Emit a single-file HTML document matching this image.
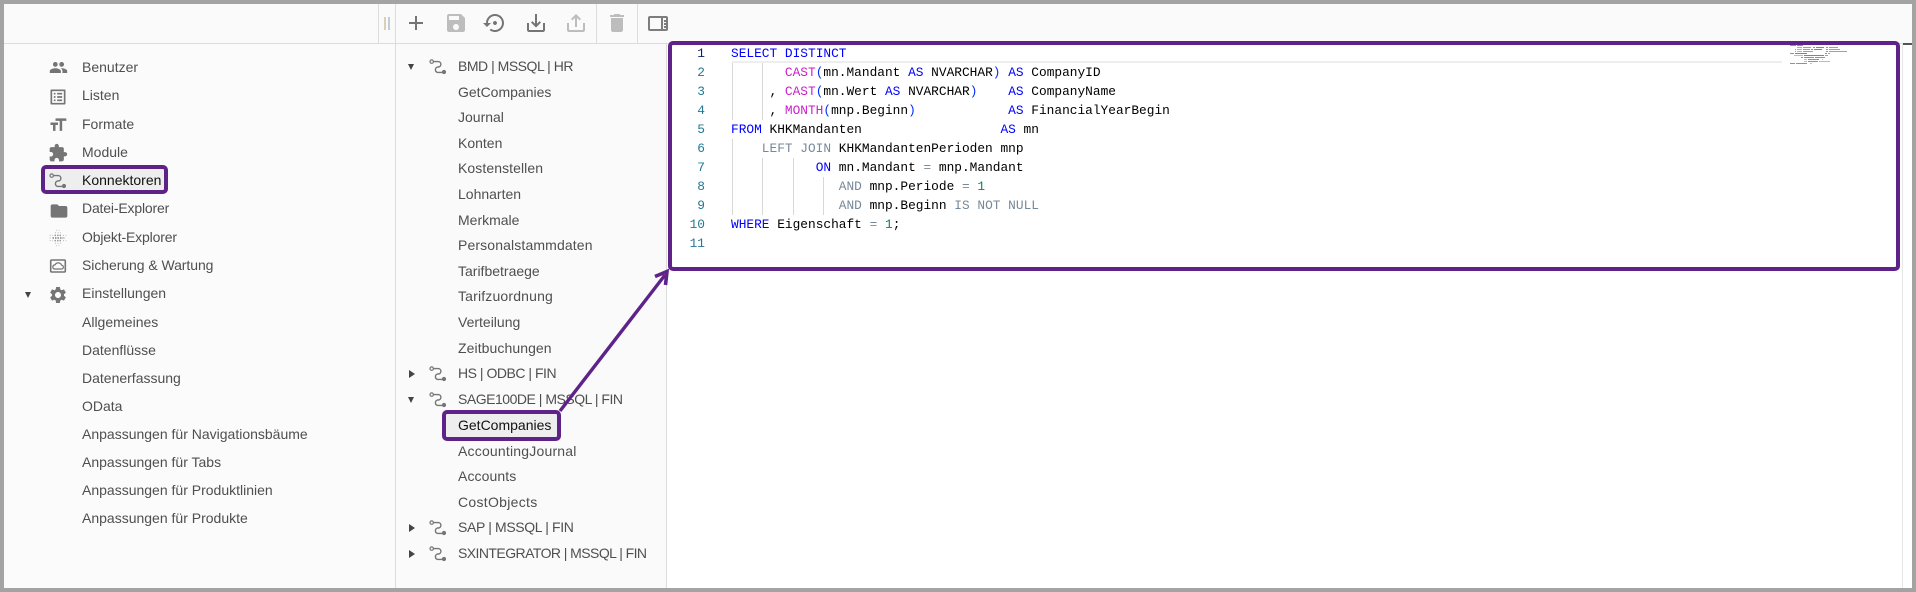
<!DOCTYPE html>
<html><head><meta charset="utf-8">
<style>
html,body{margin:0;padding:0;background:#fff}
#p{position:relative;width:1916px;height:592px;overflow:hidden;background:#fff;font-family:"Liberation Sans",sans-serif;font-size:14px;color:#4f4f4f}
.a{position:absolute}
.t{position:absolute;white-space:pre;line-height:20px;height:20px}
.t.s{color:#111}
.cp{letter-spacing:-.48px}
svg{position:absolute;overflow:visible}
.i{fill:#757575}
.d{fill:#bdbdbd}
.c{position:absolute;left:731px;white-space:pre;font-family:"Liberation Mono",monospace;font-size:12.83px;line-height:19px;height:19px;color:#000}
.n{position:absolute;width:50px;left:655px;text-align:right;font-family:"Liberation Mono",monospace;font-size:12.83px;line-height:19px;height:19px;color:#237893}
.k{color:#00f}.f{color:#c81fc8}.b{color:#0431fa}.g{color:#778899}.u{color:#098658}
.ig{position:absolute;width:1px;background:#d8d8d8}
.v{position:absolute;width:1px;background:#dcdcdc}
.tr{position:absolute;width:0;height:0}
.dn{border-left:3.8px solid transparent;border-right:3.8px solid transparent;border-top:6px solid #444}
.rt{border-top:4px solid transparent;border-bottom:4px solid transparent;border-left:6px solid #444}
</style></head><body>
<div id="p">
<!-- panels -->
<div class="a" style="left:4px;top:4px;width:1908px;height:39px;background:#fafafa"></div>
<div class="a" style="left:4px;top:44px;width:391px;height:544px;background:#fbfbfb"></div>
<div class="a" style="left:396px;top:44px;width:270px;height:544px;background:#fafafb"></div>
<div class="a" style="left:4px;top:43px;width:1908px;height:1px;background:#dcdcdc"></div>
<div class="v" style="left:378px;top:4px;height:39px"></div>
<div class="v" style="left:395px;top:4px;height:584px"></div>
<div class="v" style="left:596px;top:4px;height:39px"></div>
<div class="v" style="left:637px;top:4px;height:39px"></div>
<div class="v" style="left:666px;top:44px;height:544px"></div>
<div class="v" style="left:1902px;top:44px;height:544px;background:#e6e6e6"></div>
<div class="a" style="left:1903px;top:43px;width:9px;height:2px;background:#555"></div>
<!-- handle -->
<div class="a" style="left:384px;top:17px;width:2px;height:13px;background:#e0cdb8"></div>
<div class="a" style="left:387.5px;top:17px;width:2px;height:13px;background:#c0cddb"></div>

<!-- toolbar icons -->
<svg style="left:404px;top:11px" width="24" height="24" viewBox="0 0 24 24"><path class="i" d="M19 13h-6v6h-2v-6H5v-2h6V5h2v6h6v2z"/></svg>
<svg style="left:444px;top:11px" width="24" height="24" viewBox="0 0 24 24"><path class="d" d="M17 3H5c-1.11 0-2 .9-2 2v14c0 1.1.89 2 2 2h14c1.1 0 2-.9 2-2V7l-4-4zm-5 16c-1.66 0-3-1.34-3-3s1.34-3 3-3 3 1.34 3 3-1.34 3-3 3zm3-10H5V5h10v4z"/></svg>
<svg style="left:483px;top:11px" width="24" height="24" viewBox="0 0 24 24"><path class="i" d="M14 12c0-1.1-.9-2-2-2s-2 .9-2 2 .9 2 2 2 2-.9 2-2zm-2-9c-4.97 0-9 4.03-9 9H0l4 4 4-4H5c0-3.87 3.13-7 7-7s7 3.13 7 7-3.13 7-7 7c-1.51 0-2.91-.49-4.06-1.3l-1.42 1.44C8.04 20.3 9.94 21 12 21c4.97 0 9-4.03 9-9s-4.03-9-9-9z"/></svg>
<svg style="left:524px;top:11px" width="24" height="24" viewBox="0 0 24 24"><path class="i" d="M19 12v7H5v-7H3v7c0 1.1.9 2 2 2h14c1.1 0 2-.9 2-2v-7h-2zm-6 .67l2.59-2.58L17 11.5l-5 5-5-5 1.41-1.41L11 12.67V3h2z"/></svg>
<svg style="left:564px;top:11px" width="24" height="24" viewBox="0 0 24 24"><path class="d" d="M19 12v7H5v-7H3v7c0 1.1.9 2 2 2h14c1.1 0 2-.9 2-2v-7h-2zM11 6.83 8.41 9.41 7 8l5-5 5 5-1.41 1.41L13 6.83V16h-2z"/></svg>
<svg style="left:605px;top:11px" width="24" height="24" viewBox="0 0 24 24"><path class="d" d="M6 19c0 1.1.9 2 2 2h8c1.1 0 2-.9 2-2V7H6v12zM19 4h-3.5l-1-1h-5l-1 1H5v2h14V4z"/></svg>
<svg style="left:648px;top:15px" width="20" height="17" viewBox="0 0 20 17"><rect x="1" y="2" width="18" height="13" rx="1" fill="none" stroke="#7d7d7d" stroke-width="2"/><rect x="13" y="2" width="2" height="13" fill="#7d7d7d"/><rect x="16" y="5" width="2.5" height="2" fill="#7d7d7d"/><rect x="16" y="8" width="2.5" height="2" fill="#7d7d7d"/><rect x="16" y="11" width="2.5" height="2" fill="#7d7d7d"/></svg>

<!-- sidebar highlight -->
<div class="a" style="left:41px;top:165px;width:119px;height:21px;border:4px solid #5f2289;border-radius:5px;background:#eee"></div>

<!-- left icons -->
<svg style="left:49px;top:58px" width="19" height="19" viewBox="0 0 24 24"><path class="i" d="M16 11c1.66 0 2.99-1.34 2.99-3S17.66 5 16 5c-1.66 0-3 1.34-3 3s1.34 3 3 3zm-8 0c1.66 0 2.99-1.34 2.99-3S9.66 5 8 5C6.34 5 5 6.34 5 8s1.34 3 3 3zm0 2c-2.33 0-7 1.17-7 3.5V19h14v-2.5c0-2.33-4.67-3.5-7-3.5zm8 0c-.29 0-.62.02-.97.05 1.16.84 1.97 1.97 1.97 3.45V19h6v-2.5c0-2.33-4.67-3.5-7-3.5z"/></svg>
<svg style="left:48px;top:87px" width="20" height="20" viewBox="0 0 24 24"><path class="i" d="M19 5v14H5V5h14m1.1-2H3.9c-.5 0-.9.4-.9.9v16.2c0 .4.4.9.9.9h16.2c.4 0 .9-.5.9-.9V3.9c0-.5-.5-.9-.9-.9zM11 7h6v2h-6V7zm0 4h6v2h-6v-2zm0 4h6v2h-6zM7 7h2v2H7zm0 4h2v2H7zm0 4h2v2H7z"/></svg>
<svg style="left:48px;top:115px" width="20" height="20" viewBox="0 0 24 24"><path class="i" d="M9 4v3h5v12h3V7h5V4H9zm-6 8h3v7h3v-7h3V9H3v3z"/></svg>
<svg style="left:48px;top:143px" width="20" height="20" viewBox="0 0 24 24"><path class="i" d="M20.5 11H19V7c0-1.1-.9-2-2-2h-4V3.5C13 2.12 11.88 1 10.5 1S8 2.12 8 3.5V5H4c-1.1 0-1.99.9-1.99 2v3.8H3.5c1.49 0 2.7 1.21 2.7 2.7s-1.21 2.7-2.7 2.7H2V20c0 1.1.9 2 2 2h3.8v-1.5c0-1.49 1.21-2.7 2.7-2.7 1.49 0 2.7 1.21 2.7 2.7V22H17c1.1 0 2-.9 2-2v-4h1.5c1.38 0 2.5-1.12 2.5-2.5S21.88 11 20.5 11z"/></svg>
<svg style="left:48px;top:171px" width="20" height="20" viewBox="0 0 20 20"><circle cx="3.7" cy="4.6" r="1.7" fill="none" stroke="#757575" stroke-width="1.2"/><path d="M5.5 4.6H10.2a2.7 2.7 0 0 1 0 5.4H9.5a2.8 2.8 0 0 0 0 5.4H15" fill="none" stroke="#757575" stroke-width="1.4"/><circle cx="16" cy="15" r="2.1" fill="#757575"/></svg>
<svg style="left:48.5px;top:200.7px" width="20" height="20" viewBox="0 0 24 24"><path class="i" d="M10 4H4c-1.1 0-1.99.9-1.99 2L2 18c0 1.1.9 2 2 2h16c1.1 0 2-.9 2-2V8c0-1.1-.9-2-2-2h-8l-2-2z"/></svg>
<svg style="left:48px;top:228px" width="20" height="20" viewBox="0 0 20 20">
<g stroke="#8a8a8a" fill="none"><path d="M4.5 10H15.5" stroke-width="1.6" stroke-dasharray="1.5 1" stroke="#777" opacity=".9"/><path d="M6.5 7.4H13.5M6.5 12.6H13.5" stroke-width="1.5" stroke-dasharray="1.5 1" opacity=".85"/><path d="M1.7 10H4M16 10H18.3M1.7 7.4H5M15 7.4H18.3M1.7 12.6H5M15 12.6H18.3M7 4.8H13M7 15.2H13" stroke-width="1" stroke-dasharray="1 1.6" opacity=".6"/><path d="M8 2.2H12M8 17.8H12" stroke-width="1" stroke-dasharray="1 1.6" opacity=".45"/></g></svg>
<svg style="left:48px;top:256px" width="20" height="20" viewBox="0 0 20 20"><rect x="2.7" y="4" width="14.6" height="12" rx="1" fill="none" stroke="#757575" stroke-width="1.6"/><path d="M6.3 13H13.4a1.9 1.9 0 0 0 .2-3.8A3.6 3.6 0 0 0 7 8.9 2.1 2.1 0 0 0 6.3 13z" fill="none" stroke="#757575" stroke-width="1.2"/></svg>
<svg style="left:48px;top:285px" width="20" height="20" viewBox="0 0 24 24"><path class="i" d="M19.14 12.94c.04-.3.06-.61.06-.94 0-.32-.02-.64-.07-.94l2.03-1.58c.18-.14.23-.41.12-.61l-1.92-3.32c-.12-.22-.37-.29-.59-.22l-2.39.96c-.5-.38-1.03-.7-1.62-.94l-.36-2.54c-.04-.24-.24-.41-.48-.41h-3.84c-.24 0-.43.17-.47.41l-.36 2.54c-.59.24-1.13.57-1.62.94l-2.39-.96c-.22-.08-.47 0-.59.22L2.74 8.87c-.12.21-.08.47.12.61l2.03 1.58c-.05.3-.09.63-.09.94s.02.64.07.94l-2.03 1.58c-.18.14-.23.41-.12.61l1.92 3.32c.12.22.37.29.59.22l2.39-.96c.5.38 1.03.7 1.62.94l.36 2.54c.05.24.24.41.48.41h3.84c.24 0 .44-.17.47-.41l.36-2.54c.59-.24 1.13-.56 1.62-.94l2.39.96c.22.08.47 0 .59-.22l1.92-3.32c.12-.22.07-.47-.12-.61l-2.01-1.58zM12 15.6c-1.98 0-3.6-1.62-3.6-3.6s1.62-3.6 3.6-3.6 3.6 1.62 3.6 3.6-1.62 3.6-3.6 3.6z"/></svg>
<div class="tr dn" style="left:25px;top:292px"></div>

<!-- left text -->
<span class="t" style="left:82px;top:57px">Benutzer</span>
<span class="t" style="left:82px;top:85px">Listen</span>
<span class="t" style="left:82px;top:114px">Formate</span>
<span class="t" style="left:82px;top:142px">Module</span>
<span class="t s" style="left:82px;top:170px">Konnektoren</span>
<span class="t" style="left:82px;top:198px;letter-spacing:-.17px">Datei-Explorer</span>
<span class="t" style="left:82px;top:227px;letter-spacing:-.16px">Objekt-Explorer</span>
<span class="t" style="left:82px;top:255px;letter-spacing:-.06px">Sicherung &amp; Wartung</span>
<span class="t" style="left:82px;top:283px">Einstellungen</span>
<span class="t" style="left:82px;top:312px">Allgemeines</span>
<span class="t" style="left:82px;top:340px">Datenflüsse</span>
<span class="t" style="left:82px;top:368px">Datenerfassung</span>
<span class="t" style="left:82px;top:396px">OData</span>
<span class="t" style="left:82px;top:424px">Anpassungen für Navigationsbäume</span>
<span class="t" style="left:82px;top:452px">Anpassungen für Tabs</span>
<span class="t" style="left:82px;top:480px">Anpassungen für Produktlinien</span>
<span class="t" style="left:82px;top:508px">Anpassungen für Produkte</span>

<!-- middle highlight -->
<div class="a" style="left:442px;top:410px;width:111px;height:23px;border:4px solid #5f2289;border-radius:5px;background:#eee"></div>

<!-- middle tree icons -->
<svg style="left:428px;top:57px" width="20" height="20" viewBox="0 0 20 20"><circle cx="3.7" cy="4.6" r="1.7" fill="none" stroke="#757575" stroke-width="1.2"/><path d="M5.5 4.6H10.2a2.7 2.7 0 0 1 0 5.4H9.5a2.8 2.8 0 0 0 0 5.4H15" fill="none" stroke="#757575" stroke-width="1.4"/><circle cx="16" cy="15" r="2.1" fill="#757575"/></svg>
<svg style="left:428px;top:364px" width="20" height="20" viewBox="0 0 20 20"><circle cx="3.7" cy="4.6" r="1.7" fill="none" stroke="#757575" stroke-width="1.2"/><path d="M5.5 4.6H10.2a2.7 2.7 0 0 1 0 5.4H9.5a2.8 2.8 0 0 0 0 5.4H15" fill="none" stroke="#757575" stroke-width="1.4"/><circle cx="16" cy="15" r="2.1" fill="#757575"/></svg>
<svg style="left:428px;top:390px" width="20" height="20" viewBox="0 0 20 20"><circle cx="3.7" cy="4.6" r="1.7" fill="none" stroke="#757575" stroke-width="1.2"/><path d="M5.5 4.6H10.2a2.7 2.7 0 0 1 0 5.4H9.5a2.8 2.8 0 0 0 0 5.4H15" fill="none" stroke="#757575" stroke-width="1.4"/><circle cx="16" cy="15" r="2.1" fill="#757575"/></svg>
<svg style="left:428px;top:518px" width="20" height="20" viewBox="0 0 20 20"><circle cx="3.7" cy="4.6" r="1.7" fill="none" stroke="#757575" stroke-width="1.2"/><path d="M5.5 4.6H10.2a2.7 2.7 0 0 1 0 5.4H9.5a2.8 2.8 0 0 0 0 5.4H15" fill="none" stroke="#757575" stroke-width="1.4"/><circle cx="16" cy="15" r="2.1" fill="#757575"/></svg>
<svg style="left:428px;top:544px" width="20" height="20" viewBox="0 0 20 20"><circle cx="3.7" cy="4.6" r="1.7" fill="none" stroke="#757575" stroke-width="1.2"/><path d="M5.5 4.6H10.2a2.7 2.7 0 0 1 0 5.4H9.5a2.8 2.8 0 0 0 0 5.4H15" fill="none" stroke="#757575" stroke-width="1.4"/><circle cx="16" cy="15" r="2.1" fill="#757575"/></svg>
<div class="tr dn" style="left:408px;top:64px"></div>
<div class="tr rt" style="left:409px;top:370px"></div>
<div class="tr dn" style="left:408px;top:397px"></div>
<div class="tr rt" style="left:409px;top:524px"></div>
<div class="tr rt" style="left:409px;top:550px"></div>

<!-- middle text -->
<span class="t cp" style="left:458px;top:56px">BMD | MSSQL | HR</span>
<span class="t" style="left:458px;top:82px">GetCompanies</span>
<span class="t" style="left:458px;top:107px">Journal</span>
<span class="t" style="left:458px;top:133px">Konten</span>
<span class="t" style="left:458px;top:158px;letter-spacing:.08px">Kostenstellen</span>
<span class="t" style="left:458px;top:184px">Lohnarten</span>
<span class="t" style="left:458px;top:210px">Merkmale</span>
<span class="t" style="left:458px;top:235px;letter-spacing:.13px">Personalstammdaten</span>
<span class="t" style="left:458px;top:261px">Tarifbetraege</span>
<span class="t" style="left:458px;top:286px;letter-spacing:.17px">Tarifzuordnung</span>
<span class="t" style="left:458px;top:312px">Verteilung</span>
<span class="t" style="left:458px;top:338px;letter-spacing:.08px">Zeitbuchungen</span>
<span class="t cp" style="left:458px;top:363px">HS | ODBC | FIN</span>
<span class="t cp" style="left:458px;top:389px">SAGE100DE | MSSQL | FIN</span>
<span class="t s" style="left:458px;top:415px">GetCompanies</span>
<span class="t" style="left:458px;top:441px;letter-spacing:.2px">AccountingJournal</span>
<span class="t" style="left:458px;top:466px;letter-spacing:.1px">Accounts</span>
<span class="t" style="left:458px;top:492px;letter-spacing:.3px">CostObjects</span>
<span class="t" style="left:458px;top:517px;letter-spacing:-.36px">SAP | MSSQL | FIN</span>
<span class="t" style="left:458px;top:543px;letter-spacing:-.56px">SXINTEGRATOR | MSSQL | FIN</span>

<!-- editor -->
<div class="a" style="left:732px;top:61px;width:1050px;height:2px;background:#eee"></div>
<div class="ig" style="left:732px;top:63px;height:57px"></div>
<div class="ig" style="left:762px;top:63px;height:57px"></div>
<div class="ig" style="left:732px;top:139px;height:76px"></div>
<div class="ig" style="left:762px;top:158px;height:57px"></div>
<div class="ig" style="left:793px;top:158px;height:57px"></div>
<div class="ig" style="left:823px;top:177px;height:38px"></div>

<span class="n" style="top:44px;color:#0b216f">1</span>
<span class="n" style="top:63px">2</span>
<span class="n" style="top:82px">3</span>
<span class="n" style="top:101px">4</span>
<span class="n" style="top:120px">5</span>
<span class="n" style="top:139px">6</span>
<span class="n" style="top:158px">7</span>
<span class="n" style="top:177px">8</span>
<span class="n" style="top:196px">9</span>
<span class="n" style="top:215px">10</span>
<span class="n" style="top:234px">11</span>

<div class="c" style="top:44px"><span class="k">SELECT</span> <span class="k">DISTINCT</span></div>
<div class="c" style="top:63px">       <span class="f">CAST</span><span class="b">(</span>mn.Mandant <span class="k">AS</span> NVARCHAR<span class="b">)</span> <span class="k">AS</span> CompanyID</div>
<div class="c" style="top:82px">     , <span class="f">CAST</span><span class="b">(</span>mn.Wert <span class="k">AS</span> NVARCHAR<span class="b">)</span>    <span class="k">AS</span> CompanyName</div>
<div class="c" style="top:101px">     , <span class="f">MONTH</span><span class="b">(</span>mnp.Beginn<span class="b">)</span>            <span class="k">AS</span> FinancialYearBegin</div>
<div class="c" style="top:120px"><span class="k">FROM</span> KHKMandanten                  <span class="k">AS</span> mn</div>
<div class="c" style="top:139px">    <span class="g">LEFT JOIN</span> KHKMandantenPerioden mnp</div>
<div class="c" style="top:158px">           <span class="k">ON</span> mn.Mandant <span class="g">=</span> mnp.Mandant</div>
<div class="c" style="top:177px">              <span class="g">AND</span> mnp.Periode <span class="g">=</span> <span class="u">1</span></div>
<div class="c" style="top:196px">              <span class="g">AND</span> mnp.Beginn <span class="g">IS NOT NULL</span></div>
<div class="c" style="top:215px"><span class="k">WHERE</span> Eigenschaft <span class="g">=</span> <span class="u">1</span>;</div>

<!-- minimap -->
<svg style="left:1790px;top:44px" width="60" height="22" viewBox="0 0 60 22">
<g opacity=".8">
<rect x="0" y="1" width="6" height="1" fill="#66f"/><rect x="7" y="1" width="6" height="1" fill="#66f"/>
<rect x="7" y="3" width="5" height="1" fill="#e070e0"/><rect x="13" y="3" width="8" height="1" fill="#888"/><rect x="23" y="3" width="2" height="1" fill="#66f"/><rect x="26" y="3" width="8" height="1" fill="#666"/><rect x="36" y="3" width="2" height="1" fill="#66f"/><rect x="39" y="3" width="9" height="1" fill="#888"/>
<rect x="5" y="5" width="1" height="1" fill="#888"/><rect x="7" y="5" width="5" height="1" fill="#e070e0"/><rect x="13" y="5" width="7" height="1" fill="#888"/><rect x="21" y="5" width="2" height="1" fill="#66f"/><rect x="24" y="5" width="8" height="1" fill="#666"/><rect x="36" y="5" width="2" height="1" fill="#66f"/><rect x="39" y="5" width="11" height="1" fill="#888"/>
<rect x="5" y="7" width="1" height="1" fill="#888"/><rect x="7" y="7" width="5" height="1" fill="#e070e0"/><rect x="13" y="7" width="10" height="1" fill="#888"/><rect x="36" y="7" width="2" height="1" fill="#66f"/><rect x="39" y="7" width="18" height="1" fill="#888"/>
<rect x="0" y="9" width="4" height="1" fill="#66f"/><rect x="5" y="9" width="12" height="1" fill="#666"/><rect x="35" y="9" width="2" height="1" fill="#66f"/><rect x="38" y="9" width="2" height="1" fill="#888"/>
<rect x="4" y="11" width="9" height="1" fill="#aab"/><rect x="14" y="11" width="20" height="1" fill="#666"/><rect x="35" y="11" width="3" height="1" fill="#888"/>
<rect x="11" y="13" width="2" height="1" fill="#66f"/><rect x="14" y="13" width="10" height="1" fill="#777"/><rect x="25" y="13" width="10" height="1" fill="#777"/>
<rect x="14" y="15" width="3" height="1" fill="#aab"/><rect x="18" y="15" width="11" height="1" fill="#777"/><rect x="32" y="15" width="1" height="1" fill="#8c8"/>
<rect x="14" y="17" width="3" height="1" fill="#aab"/><rect x="18" y="17" width="10" height="1" fill="#777"/><rect x="29" y="17" width="11" height="1" fill="#aab"/>
<rect x="0" y="19" width="5" height="1" fill="#66f"/><rect x="6" y="19" width="11" height="1" fill="#777"/><rect x="20" y="19" width="2" height="1" fill="#8c8"/>
</g></svg>

<!-- annotations -->
<div class="a" style="left:668px;top:41px;width:1224px;height:222px;border:4px solid #5f2289;border-radius:5px"></div>
<svg style="left:0;top:0" width="1916" height="592">
<line x1="560" y1="411" x2="665" y2="275" stroke="#5f2289" stroke-width="3.4"/>
<path d="M655 276.5 L667 271.5 L665.5 285" fill="none" stroke="#5f2289" stroke-width="3.6" stroke-linejoin="miter"/>
</svg>

<!-- outer frame -->
<div class="a" style="left:0;top:0;width:1916px;height:4px;background:#a3a3a3"></div>
<div class="a" style="left:0;top:588px;width:1916px;height:4px;background:#a3a3a3"></div>
<div class="a" style="left:0;top:0;width:4px;height:592px;background:#a3a3a3"></div>
<div class="a" style="left:1912px;top:0;width:4px;height:592px;background:#a3a3a3"></div>
</div>
</body></html>
